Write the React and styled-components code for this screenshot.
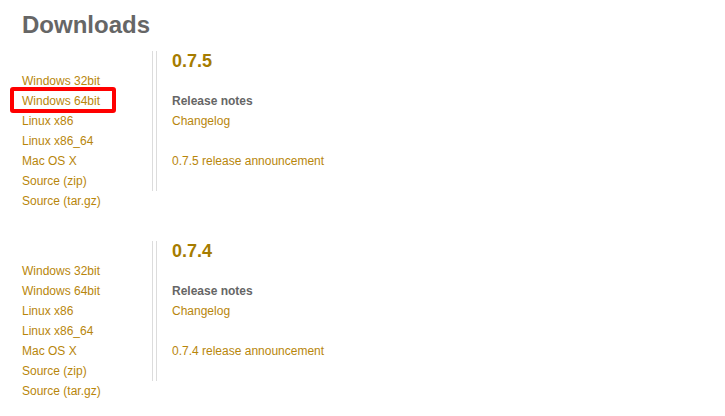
import React from "react";
import styled, { createGlobalStyle } from "styled-components";

const GlobalStyle = createGlobalStyle`
  body {
    margin: 0;
    background: #fff;
    font-family: "Liberation Sans", Arial, sans-serif;
  }
`;

const releases = [
  { version: "0.7.5", highlight: "Windows 64bit" },
  { version: "0.7.4", highlight: null },
];

const platforms = [
  "Windows 32bit",
  "Windows 64bit",
  "Linux x86",
  "Linux x86_64",
  "Mac OS X",
  "Source (zip)",
  "Source (tar.gz)",
];

const Page = styled.div`
  padding: 0 22px;
`;

const Title = styled.h1`
  margin: 11px 0 12px;
  font-size: 24px;
  line-height: 28px;
  font-weight: bold;
  color: #666;
`;

const Release = styled.section`
  display: flex;
  align-items: flex-start;
  margin-bottom: 30px;
`;

const Platforms = styled.ul`
  list-style: none;
  margin: 0;
  padding: 20px 0 0;
  width: 130px;
  flex-shrink: 0;
`;

const Platform = styled.li`
  font-size: 12px;
  line-height: 20px;
`;

const Link = styled.a`
  position: relative;
  color: #b8860b;
  text-decoration: none;

  ${(p) =>
    p.$marked &&
    `
    &::after {
      content: "";
      position: absolute;
      left: -12px;
      top: -7px;
      width: 106px;
      height: 26px;
      box-sizing: border-box;
      border: 4px solid #ff0000;
      border-radius: 3px;
    }
  `}
`;

const Notes = styled.div`
  border-left: 1px solid #dcdcdc;
  padding-left: 3px;
`;

const NotesInner = styled.div`
  border-left: 1px solid #dcdcdc;
  padding: 0 0 20px 15px;
  font-size: 12px;
  line-height: 20px;
`;

const Version = styled.h3`
  margin: 0 0 20px;
  font-size: 18px;
  line-height: 20px;
  font-weight: bold;
  color: #a67c00;
`;

const Label = styled.div`
  font-weight: bold;
  color: #666;
`;

const Gap = styled.div`
  height: 20px;
`;

export default function App() {
  return (
    <Page>
      <GlobalStyle />
      <Title>Downloads</Title>
      {releases.map((r) => (
        <Release key={r.version}>
          <Platforms>
            {platforms.map((name) => (
              <Platform key={name}>
                <Link href="#" $marked={r.highlight === name}>
                  {name}
                </Link>
              </Platform>
            ))}
          </Platforms>
          <Notes>
            <NotesInner>
              <Version>{r.version}</Version>
              <Label>Release notes</Label>
              <div>
                <Link href="#">Changelog</Link>
              </div>
              <Gap />
              <div>
                <Link href="#">{r.version} release announcement</Link>
              </div>
            </NotesInner>
          </Notes>
        </Release>
      ))}
    </Page>
  );
}
